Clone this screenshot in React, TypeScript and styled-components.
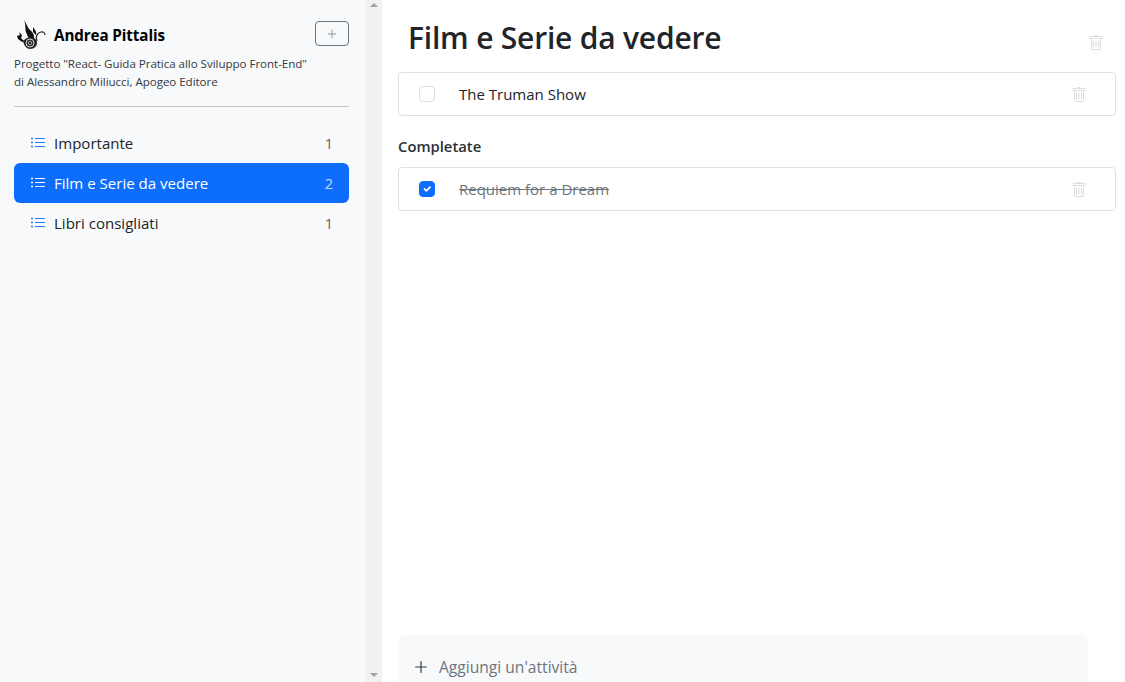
import React from "react";
import styled, { createGlobalStyle } from "styled-components";

const Global = createGlobalStyle`
  html, body { margin: 0; padding: 0; height: 100%; overflow: hidden; background: #fff; }
  body { font-family: "Open Sans", "Noto Sans", "Liberation Sans", sans-serif; color: #212529; }
  * { box-sizing: border-box; }
`;

const Page = styled.div`
  display: flex;
  width: 1125px;
  height: 682px;
  overflow: hidden;
`;

const Sidebar = styled.aside`
  width: 365px;
  flex: none;
  background: #f8f9fa;
  padding: 20px 16px 0 14px;
`;

const Brand = styled.div`
  display: flex;
  align-items: center;
  height: 30px;
  padding-left: 2px;
`;

const BrandName = styled.span`
  margin-left: 8px;
  font-size: 15.2px;
  font-weight: 700;
  color: #000;
  flex: 1;
  letter-spacing: -0.1px;
`;

const AddListButton = styled.button`
  width: 34px;
  height: 25px;
  padding: 0;
  align-self: flex-start;
  margin-top: 1px;
  display: flex;
  align-items: center;
  justify-content: center;
  background: transparent;
  border: 1px solid #6c757d;
  border-radius: 4px;
  color: #8a939b;
`;

const Description = styled.p`
  margin: 5px 0 0;
  font-size: 11.6px;
  line-height: 18px;
  color: #343a40;
  letter-spacing: -0.05px;
  white-space: nowrap;
`;

const Divider = styled.hr`
  margin: 15px 0 16px;
  height: 1px;
  border: 0;
  background: #c4c5c6;
`;

const ListNav = styled.nav`
  display: flex;
  flex-direction: column;
`;

const ListRow = styled.div<{ $active?: boolean }>`
  display: flex;
  align-items: center;
  height: 40px;
  padding: 0 16px;
  gap: 8px;
  border-radius: 6px;
  font-size: 15.05px;
  background: ${(p) => (p.$active ? "#0d6efd" : "transparent")};
  color: ${(p) => (p.$active ? "#fff" : "#212529")};
`;

const ListIcon = styled.span<{ $active?: boolean }>`
  display: flex;
  width: 16px;
  color: ${(p) => (p.$active ? "#fff" : "#1f7cff")};
`;

const ListName = styled.span`
  flex: 1;
`;

const ListCount = styled.span`
  font-size: 14.5px;
  opacity: 0.72;
`;

const Scrollbar = styled.div`
  width: 17px;
  flex: none;
  background: #f1f1f1;
  display: flex;
  flex-direction: column;
  justify-content: space-between;
  align-items: center;
  padding: 3px 0 5px;
`;

const Arrow = styled.span<{ $down?: boolean }>`
  width: 0;
  height: 0;
  border-left: 4px solid transparent;
  border-right: 4px solid transparent;
  ${(p) => (p.$down ? "border-top: 4px solid #a3a3a3;" : "border-bottom: 4px solid #a3a3a3;")}
`;

const Main = styled.main`
  flex: 1;
  height: 682px;
  padding: 0 9px 0 16px;
  display: flex;
  flex-direction: column;
`;

const TitleBar = styled.header`
  display: flex;
  align-items: center;
  justify-content: space-between;
  height: 72px;
  padding: 12px 12px 0 10px;
`;

const Title = styled.h1`
  margin: 0;
  font-size: 30px;
  line-height: 1.2;
  font-weight: 600;
  color: #212529;
  position: relative;
  top: -4px;
  letter-spacing: -0.2px;
`;

const TaskCard = styled.div`
  display: flex;
  align-items: center;
  height: 44px;
  padding: 0 28px 0 20px;
  background: #fff;
  border: 1px solid #dfe0e1;
  border-radius: 4px;
`;

const Check = styled.span<{ $done?: boolean }>`
  width: 16px;
  height: 16px;
  flex: none;
  display: flex;
  align-items: center;
  justify-content: center;
  border-radius: 4px;
  background: ${(p) => (p.$done ? "#0d6efd" : "#fff")};
  border: 1px solid ${(p) => (p.$done ? "#0d6efd" : "#dcdfe2")};
`;

const TaskText = styled.span<{ $done?: boolean }>`
  flex: 1;
  margin-left: 24px;
  font-size: 15px;
  color: ${(p) => (p.$done ? "#6c757d" : "#212529")};
  text-decoration: ${(p) => (p.$done ? "line-through" : "none")};
`;

const TrashWrap = styled.span`
  display: flex;
  color: #dcdee0;
  position: relative;
  top: 1px;
`;

const SectionLabel = styled.h2`
  margin: 21px 0 11px;
  font-size: 14.8px;
  line-height: 19px;
  font-weight: 600;
  color: #2b3035;
`;

const Spacer = styled.div`
  flex: 1;
`;

const AddBar = styled.div`
  display: flex;
  align-items: center;
  width: 690px;
  height: 47px;
  padding: 17px 0 0 15px;
  gap: 10px;
  background: #f8f9fa;
  border-radius: 6px 6px 0 0;
  color: #6c757d;
  font-size: 15.6px;
`;

const PlusIcon = styled.span`
  display: flex;
  color: #343a40;
`;

const Plus = ({ size }: { size: number }) => (
  <svg width={size} height={size} viewBox="0 0 16 16" fill="currentColor">
    <path d="M8 2a.6.6 0 0 1 .6.6v4.800h4.800a.6.6 0 0 1 0 1.200H8.600v4.800a.6.6 0 0 1-1.200 0V8.600H2.600a.6.6 0 0 1 0-1.200h4.800V2.600A.6.6 0 0 1 8 2z" />
  </svg>
);

const ListUl = () => (
  <svg width="16" height="16" viewBox="0 0 16 16" fill="currentColor">
    <path d="M5 11.5a.5.5 0 0 1 .5-.5h9a.5.5 0 0 1 0 1h-9a.5.5 0 0 1-.5-.5zm0-4a.5.5 0 0 1 .5-.5h9a.5.5 0 0 1 0 1h-9a.5.5 0 0 1-.5-.5zm0-4a.5.5 0 0 1 .5-.5h9a.5.5 0 0 1 0 1h-9a.5.5 0 0 1-.5-.5zm-3 1a1 1 0 1 0 0-2 1 1 0 0 0 0 2zm0 4a1 1 0 1 0 0-2 1 1 0 0 0 0 2zm0 4a1 1 0 1 0 0-2 1 1 0 0 0 0 2z" />
  </svg>
);

const Trash = () => (
  <svg width="16" height="16" viewBox="0 0 16 16" fill="currentColor">
    <path d="M5.5 5.5A.5.5 0 0 1 6 6v6a.5.5 0 0 1-1 0V6a.5.5 0 0 1 .5-.5zm2.5 0a.5.5 0 0 1 .5.5v6a.5.5 0 0 1-1 0V6a.5.5 0 0 1 .5-.5zm3 .5a.5.5 0 0 0-1 0v6a.5.5 0 0 0 1 0V6z" />
    <path
      fillRule="evenodd"
      d="M14.5 3a1 1 0 0 1-1 1H13v9a2 2 0 0 1-2 2H5a2 2 0 0 1-2-2V4h-.5a1 1 0 0 1-1-1V2a1 1 0 0 1 1-1H6a1 1 0 0 1 1-1h2a1 1 0 0 1 1 1h3.5a1 1 0 0 1 1 1v1zM4.118 4 4 4.059V13a1 1 0 0 0 1 1h6a1 1 0 0 0 1-1V4.059L11.882 4H4.118zM2.5 3V2h11v1h-11z"
    />
  </svg>
);

const Tick = () => (
  <svg width="12" height="12" viewBox="0 0 20 20">
    <path fill="none" stroke="#fff" strokeLinecap="round" strokeLinejoin="round" strokeWidth="3" d="M6 10l3 3l6-6" />
  </svg>
);

const Logo = () => (
  <svg width="30" height="30" viewBox="0 0 30 30" style={{ flex: "none" }}>
    <path fill="#111" d="M8 0c2 3 3 6 5 9 2 2 5 4 5 8 0 2-1 3-2 3l-4-3-2-5C9 9 10 5 8 0z" />
    <path fill="#111" d="M3 12l3 3-1 3 3 3-2 1-4-3-1-3 3-1zM17 7c2 3 4 5 3 8l-3-3z" />
    <path fill="none" stroke="#222" strokeWidth="1.2" d="M21 21c-2-4 0-8 4-9 2-.5 4 .5 4 3" />
    <path fill="#222" d="M7 21c2-2 5-4 8-4s6 3 6 6-3 6-7 6c-3 0-6-3-7-8z" />
    <circle cx="14" cy="23" r="4" fill="none" stroke="#ddd" strokeWidth="1" />
    <circle cx="14" cy="23" r="1.8" fill="none" stroke="#ccc" strokeWidth=".8" />
  </svg>
);

const lists = [
  { name: "Importante", count: 1 },
  { name: "Film e Serie da vedere", count: 2, active: true },
  { name: "Libri consigliati", count: 1 },
];

export default function App() {
  return (
    <Page>
      <Global />
      <Sidebar>
        <Brand>
          <Logo />
          <BrandName>Andrea Pittalis</BrandName>
          <AddListButton>
            <Plus size={12} />
          </AddListButton>
        </Brand>
        <Description>
          Progetto "React- Guida Pratica allo Sviluppo Front-End"
          <br />
          di Alessandro Miliucci, Apogeo Editore
        </Description>
        <Divider />
        <ListNav>
          {lists.map((l) => (
            <ListRow key={l.name} $active={l.active}>
              <ListIcon $active={l.active}>
                <ListUl />
              </ListIcon>
              <ListName>{l.name}</ListName>
              <ListCount>{l.count}</ListCount>
            </ListRow>
          ))}
        </ListNav>
      </Sidebar>
      <Scrollbar>
        <Arrow />
        <Arrow $down />
      </Scrollbar>
      <Main>
        <TitleBar>
          <Title>Film e Serie da vedere</Title>
          <TrashWrap>
            <Trash />
          </TrashWrap>
        </TitleBar>
        <TaskCard>
          <Check />
          <TaskText>The Truman Show</TaskText>
          <TrashWrap>
            <Trash />
          </TrashWrap>
        </TaskCard>
        <SectionLabel>Completate</SectionLabel>
        <TaskCard>
          <Check $done>
            <Tick />
          </Check>
          <TaskText $done>Requiem for a Dream</TaskText>
          <TrashWrap>
            <Trash />
          </TrashWrap>
        </TaskCard>
        <Spacer />
        <AddBar>
          <PlusIcon>
            <Plus size={16} />
          </PlusIcon>
          Aggiungi un'attività
        </AddBar>
      </Main>
    </Page>
  );
}
